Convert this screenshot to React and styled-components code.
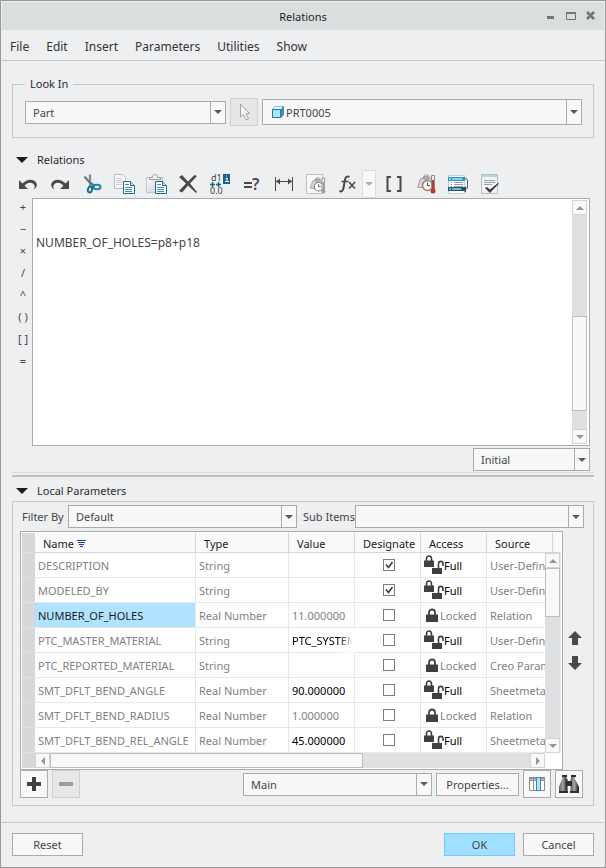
import React, { useState } from "react";
import styled, { createGlobalStyle } from "styled-components";

const operators = ["+", "−", "×", "/", "^", "( )", "[ ]", "="];

const parameters = [
  { name: "DESCRIPTION", type: "String", value: "", designate: true, access: "Full", source: "User-Defined" },
  { name: "MODELED_BY", type: "String", value: "", designate: true, access: "Full", source: "User-Defined" },
  { name: "NUMBER_OF_HOLES", type: "Real Number", value: "11.000000", designate: false, access: "Locked", source: "Relation" },
  { name: "PTC_MASTER_MATERIAL", type: "String", value: "PTC_SYSTEM", designate: false, access: "Full", source: "User-Defined" },
  { name: "PTC_REPORTED_MATERIAL", type: "String", value: "", designate: false, access: "Locked", source: "Creo Parametric" },
  { name: "SMT_DFLT_BEND_ANGLE", type: "Real Number", value: "90.000000", designate: false, access: "Full", source: "Sheetmetal" },
  { name: "SMT_DFLT_BEND_RADIUS", type: "Real Number", value: "1.000000", designate: false, access: "Locked", source: "Relation" },
  { name: "SMT_DFLT_BEND_REL_ANGLE", type: "Real Number", value: "45.000000", designate: false, access: "Full", source: "Sheetmetal" },
];

/* ---------- icons ---------- */

const Svg = ({ w = 22, h = 22, children }) => (
  <svg width={w} height={h} viewBox={`0 0 ${w} ${h}`} fill="none" aria-hidden="true">
    {children}
  </svg>
);

const Triangle = ({ dir = "down", color = "#5c5c5c" }) => {
  const paths = {
    down: "M0 2h8L4 6z",
    up: "M0 6h8L4 2z",
    left: "M6 0v8L2 4z",
    right: "M2 0v8l4-4z",
  };
  return <Svg w={8} h={8}><path d={paths[dir]} fill={color} /></Svg>;
};

const UndoIcon = () => (
  <Svg>
    <path d="M2 7v9h9l-3.500-3.200C10 9.500 14 8.800 16.500 11c1.600 1.500 1.500 3.500.3 5.500 3-2 4-5 1.900-7.500C15.500 5.500 9.500 6 5.500 10.600z" fill="#48494b" />
  </Svg>
);

const RedoIcon = () => (
  <Svg>
    <path d="M20 7v9h-9l3.500-3.200C12 9.500 8 8.800 5.500 11c-1.600 1.500-1.500 3.500-.3 5.500-3-2-4-5-1.900-7.500C6.500 5.500 12.500 6 16.500 10.600z" fill="#48494b" />
  </Svg>
);

const CutIcon = () => (
  <Svg>
    <path d="M3.500 3.500l9 10M9 1.500v11" stroke="#85888b" strokeWidth="2.200" />
    <path d="M3 4l7 7" stroke="#55585b" />
    <path d="M10 10l4 3" stroke="#1f7fa8" strokeWidth="2" />
    <ellipse cx="16" cy="14" rx="3.500" ry="2.300" stroke="#1f85b0" strokeWidth="2" />
    <ellipse cx="9" cy="16.500" rx="2" ry="3" stroke="#176f96" strokeWidth="2" transform="rotate(15 9 16.500)" />
  </Svg>
);

const BluePage = () => (
  <>
    <path d="M10.500 8.500h7l4 4v8h-11z" fill="#fff" stroke="#1d6c8e" />
    <path d="M17.500 8.500v4h4" fill="#bfe2f1" stroke="#1d6c8e" />
    <path d="M12 11.500h4M12 14.500h7M12 16.500h7M12 18.500h7" stroke="#3c93ba" />
  </>
);

const CopyIcon = () => (
  <Svg>
    <path d="M1.500 1.500h8l3 3v11h-11z" fill="#f8f8f8" stroke="#bcbec0" />
    <path d="M3 5.500h6M3 7.500h7M3 9.500h7M3 11.500h6" stroke="#cccecf" />
    <BluePage />
  </Svg>
);

const PasteIcon = () => (
  <Svg>
    <defs>
      <linearGradient id="clip" x1="0" y1="0" x2="1" y2="1">
        <stop offset="0" stopColor="#fff" />
        <stop offset="1" stopColor="#c5c9cc" />
      </linearGradient>
    </defs>
    <path d="M1.500 4.500h16v15h-16z" fill="url(#clip)" stroke="#c2c4c6" />
    <path d="M4.500 6.500v-2h3c0-4 5-4 5 0h3v2z" fill="#f4f4f4" stroke="#999b9d" />
    <BluePage />
  </Svg>
);

const DeleteIcon = () => (
  <Svg>
    <path d="M2 4l3-2 6 6.500L17.500 2 20 3l-7 7.500 7 8.500-1 1-8-7.500L5 19.500 2 18l7-7.500z" fill="#48494b" />
  </Svg>
);

const DimensionIcon = () => (
  <Svg w={24} h={28}>
    <text x="3" y="11" fontSize="9" fill="#404244">d1</text>
    <rect x="15" y="4" width="7" height="10" fill="#146489" />
    <path d="M18 6h1M17.500 8.500h2M19 8v4M17 11.500h4" stroke="#fff" />
    <path d="M2 14.500h5M4.500 12v5M8 14.500h5M10.500 12v5" stroke="#146489" strokeWidth="1.500" />
    <text x="2" y="24" fontSize="9" fill="#404244">0.0</text>
  </Svg>
);

const VerifyIcon = () => (
  <Svg>
    <path d="M3 10h8M3 14h8" stroke="#48494b" strokeWidth="2" />
    <text x="11" y="17" fontSize="16" fontWeight="600" fill="#48494b">?</text>
  </Svg>
);

const MeasureIcon = () => (
  <Svg>
    <path d="M2.500 4v14M19.500 4v14M3 8.500h16" stroke="#48494b" />
    <path d="M3 8.500l4-3v6zM19 8.500l-4-3v6z" fill="#48494b" />
  </Svg>
);

const Gauge = ({ hand, tube }) => (
  <>
    <path d="M2.500 14.500l3-9h3c-1-5 7-5 6 0h3v9z" fill="#d3d5d7" stroke="#a3a5a7" />
    <path d="M9 6v-2h4v2z" fill="#fff" stroke="#77797b" />
    <circle cx="12.500" cy="12.500" r="5" fill="#fff" stroke={hand} strokeWidth="1.500" />
    <path d="M12.500 9.500v3H15" stroke="#48494b" />
    <path d="M16.500 2.500h3V16h-3z" fill="#f3f3f3" stroke="#8b8d8f" />
    <path d="M17 7h2v9h-2z" fill={tube} />
    <circle cx="18" cy="18" r="2.500" fill={tube} />
  </>
);

const MassIcon = () => (
  <Svg>
    <path d="M1.500 1.500h16v19h-16z" fill="#f7f8f8" stroke="#bfc1c3" />
    <g transform="translate(3 3) scale(.85)"><Gauge hand="#8d8f91" tube="#9d9fa1" /></g>
  </Svg>
);

const FunctionIcon = () => (
  <Svg>
    <path d="M12.500 4c-2.500-1.500-4 0-4.600 3L6.500 15c-.5 3-2 4-4 3" stroke="#48494b" strokeWidth="2" />
    <path d="M4.500 8.500h7" stroke="#48494b" strokeWidth="1.500" />
    <path d="M12 9l6 6.500M18 9l-6 6.500" stroke="#48494b" strokeWidth="1.600" />
  </Svg>
);

const BracketsIcon = () => (
  <Svg>
    <path d="M8 4H4.500v14H8M14 4h3.500v14H14" stroke="#48494b" strokeWidth="2" />
  </Svg>
);

const UnitsIcon = () => <Svg><Gauge hand="#b07a62" tube="#b53b32" /></Svg>;

const SwitchIcon = () => (
  <Svg>
    <path d="M1.500 2.500h16v18h-16z" fill="#fff" stroke="#bfd0d8" />
    <path d="M1 4h17v4H1z" fill="#2a9ac8" />
    <path d="M1 14h17v4H1z" fill="#0e5f83" />
    <path d="M2 6h2M5 6h10M2 16h2M5 16h9" stroke="#fff" />
    <path d="M4 9.500h1M7 9.500h9M4 11.500h1M7 11.500h9M4 13.500h1M7 13.500h9" stroke="#9b9da0" />
    <path d="M18 5.500c3 .5 2.500 2 2.500 6s-.5 5-3 5" stroke="#48494b" />
    <path d="M15 16.500l4-3v6z" fill="#48494b" />
  </Svg>
);

const CheckListIcon = () => (
  <Svg>
    <path d="M2.500 1.500h16v19h-16z" fill="#eff3f5" stroke="#b7bec3" />
    <path d="M3 2h15v2H3z" fill="#b8d5e6" />
    <path d="M5 7.500h11M5 9.500h11M5 11.500h8" stroke="#9fa4a8" />
    <path d="M6 15l2-1 3 2.500 8-6.500 1 .5-9 9.500z" fill="#3d3e40" />
  </Svg>
);

const PointerIcon = () => (
  <Svg w={14} h={20}>
    <path d="M3.500 2v13l3-2.500 2.500 5.500 2.500-1-2.500-5.500h3.500z" fill="#f4f4f4" stroke="#a5a6a8" />
  </Svg>
);

const PartIcon = () => (
  <Svg w={14} h={14}>
    <path d="M1 4.500L4 1h9v9l-3 3H1z" fill="#2d93c0" />
    <path d="M1.500 4.500h8v8h-8z" fill="#a5e6fb" stroke="#40738a" />
    <path d="M2 4l2-2.500h8L10 4z" fill="#dff7ff" />
  </Svg>
);

const LockIcon = () => (
  <Svg w={14} h={15}>
    <path d="M4 7V4.500c0-4 6-4 6 0V7" stroke="#3f4042" strokeWidth="1.800" />
    <path d="M1 6.500h12V14H1z" fill="#3f4042" />
  </Svg>
);

const FullAccessIcon = () => (
  <Svg w={20} h={20}>
    <path d="M2.500 6V4c0-4 5-4 5 0v2" stroke="#3f4042" strokeWidth="1.600" />
    <path d="M0 5.500h10V12H0z" fill="#3f4042" />
    <path d="M14.500 13V9c0-3.500 4.500-3.500 4.500 0v2" stroke="#3f4042" strokeWidth="1.600" />
    <path d="M8 13h10v6H8z" fill="#3f4042" />
  </Svg>
);

const FilterIcon = () => (
  <Svg w={9} h={9}>
    <path d="M0 1.500h9M1 3.500h7M2 5.500h5M3 7.500h3" stroke="#1c3f9e" />
  </Svg>
);

const Mark = () => (
  <Svg w={12} h={12}><path d="M3 5.500l2.500 3 4-5.500" stroke="#3c3c3c" strokeWidth="1.600" /></Svg>
);

const PlusIcon = ({ minus }) => (
  <Svg w={16} h={16}>
    <path d={minus ? "M1 8h14" : "M1 8h14M8 1v14"} stroke={minus ? "#9d9ea0" : "#3f4042"} strokeWidth="4" />
  </Svg>
);

const ColumnsIcon = () => (
  <Svg w={18} h={16}>
    <path d="M1.500 1.500h15v13h-15zM1.500 4.500h15M5.500 1.500v13M12.500 1.500v13" fill="#fff" stroke="#8d9093" />
    <path d="M1 2.500h16" stroke="#8d9093" strokeWidth="2" />
    <path d="M8.500 1.500h4v13h-4z" fill="#b5e3f5" stroke="#2c8cb7" />
  </Svg>
);

const FindIcon = () => (
  <Svg>
    <defs>
      <linearGradient id="lens" x1="0" x2="1" y1="0" y2="0">
        <stop offset="0" stopColor="#55575a" />
        <stop offset=".45" stopColor="#a5a7a9" />
        <stop offset="1" stopColor="#141414" />
      </linearGradient>
    </defs>
    <path d="M4.500 3h4v3h1v14H1v-6l3-8z" fill="url(#lens)" />
    <path d="M13 3h4v3l4 8v6h-8.500V6h.5z" fill="url(#lens)" />
    <path d="M4 2h5v2H4zM13 2h5v2h-5zM8 8h6v5H8zM1 18h9v2H1zM12 18h9v2h-9z" fill="#2e2f31" />
  </Svg>
);

const ArrowIcon = ({ down }) => (
  <Svg w={14} h={14}>
    <path d={down ? "M4 0h6v7h4l-7 7-7-7h4z" : "M4 14h6V7h4L7 0 0 7h4z"} fill="#48494b" />
  </Svg>
);

const Disclosure = () => <Svg w={12} h={6}><path d="M0 0h12L6 6z" fill="#1c1c1c" /></Svg>;

const toolsBefore = [
  ["Undo", UndoIcon], ["Redo", RedoIcon], ["Cut", CutIcon], ["Copy", CopyIcon], ["Paste", PasteIcon],
  ["Delete", DeleteIcon], ["Switch dimensions", DimensionIcon], ["Evaluate", VerifyIcon],
  ["Dimension", MeasureIcon], ["Mass properties", MassIcon],
];
const toolsAfter = [
  ["Brackets", BracketsIcon], ["Units", UnitsIcon], ["Sort relations", SwitchIcon], ["Verify", CheckListIcon],
];

/* ---------- small parts ---------- */

const Dropdown = ({ id, label, options, icon, tall, indent }) => (
  <DropdownBox $tall={tall}>
    <DropdownSelect id={id} aria-label={label} $indent={indent}>
      {options.map((o) => <option key={o}>{o}</option>)}
    </DropdownSelect>
    {icon && <DropdownIcon>{icon}</DropdownIcon>}
    <DropdownArrow><Triangle /></DropdownArrow>
  </DropdownBox>
);

const Scrollbar = ({ horizontal, before, thumb, after, className }) => (
  <Track $horizontal={horizontal} className={className}>
    <ScrollButton type="button" aria-label={horizontal ? "Scroll left" : "Scroll up"}>
      <Triangle dir={horizontal ? "left" : "up"} color="#96979a" />
    </ScrollButton>
    <Gap $grow={before} />
    <Thumb $grow={thumb} />
    <Gap $grow={after} />
    <ScrollButton type="button" aria-label={horizontal ? "Scroll right" : "Scroll down"}>
      <Triangle dir={horizontal ? "right" : "down"} color="#96979a" />
    </ScrollButton>
  </Track>
);

const ParameterRow = ({ row, selected, onSelect }) => {
  const [checked, setChecked] = useState(row.designate);
  const full = row.access === "Full";
  return (
    <tr onClick={onSelect}>
      <Handle />
      <Cell $selected={selected}>{row.name}</Cell>
      <Cell>{row.type}</Cell>
      <Cell $dark={full} $fade={row.value.length > 9}>{row.value}</Cell>
      <Cell>
        <CheckBox>
          <input
            type="checkbox"
            aria-label={`Designate ${row.name}`}
            checked={checked}
            onChange={(e) => setChecked(e.target.checked)}
          />
          {checked && <Mark />}
        </CheckBox>
      </Cell>
      <Cell $dark={full}>
        <Access $full={full}>
          {full ? <FullAccessIcon /> : <LockIcon />}
          {row.access}
        </Access>
      </Cell>
      <Cell colSpan={2}>{row.source}</Cell>
    </tr>
  );
};

export default function App() {
  const [relations, setRelations] = useState("\n\nNUMBER_OF_HOLES=p8+p18");
  const [selected, setSelected] = useState("NUMBER_OF_HOLES");

  return (
    <Window>
      <GlobalStyle />
      <TitleBar>
        <Title>Relations</Title>
        <WindowButtons>
          <button type="button" aria-label="Minimize">
            <Svg w={12} h={12}><path d="M2 7.500h7" stroke="#727477" strokeWidth="3" /></Svg>
          </button>
          <button type="button" aria-label="Maximize">
            <Svg w={12} h={12}><path d="M1.500 3v6.500h9V3M1 3h10" stroke="#727477" /><path d="M1 3h10" stroke="#727477" strokeWidth="2" /></Svg>
          </button>
          <button type="button" aria-label="Close">
            <Svg w={12} h={12}><path d="M2 2l7 7M9 2L2 9" stroke="#727477" strokeWidth="2.600" /></Svg>
          </button>
        </WindowButtons>
      </TitleBar>
      <MenuBar>
        {["File", "Edit", "Insert", "Parameters", "Utilities", "Show"].map((m) => (
          <button type="button" key={m}>{m}</button>
        ))}
      </MenuBar>

      <Content>
        <LookIn>
          <legend>Look In</legend>
          <LookInRow>
            <Dropdown label="Object type" options={["Part", "Assembly", "Feature"]} />
            <SquareButton type="button" disabled aria-label="Select"><PointerIcon /></SquareButton>
            <Dropdown label="Object" options={["PRT0005"]} icon={<PartIcon />} tall indent />
          </LookInRow>
        </LookIn>

        <SectionTitle><Disclosure />Relations</SectionTitle>
        <Toolbar>
          {toolsBefore.map(([label, Icon]) => (
            <ToolButton type="button" key={label} aria-label={label}><Icon /></ToolButton>
          ))}
          <FunctionGroup>
            <ToolButton type="button" aria-label="Insert function"><FunctionIcon /></ToolButton>
            <ToolDrop type="button" aria-label="More functions"><Triangle color="#aeb0b2" /></ToolDrop>
          </FunctionGroup>
          {toolsAfter.map(([label, Icon]) => (
            <ToolButton type="button" key={label} aria-label={label}><Icon /></ToolButton>
          ))}
        </Toolbar>

        <EditorRow>
          <Operators>
            {operators.map((o) => <button type="button" key={o}>{o}</button>)}
          </Operators>
          <Editor>
            <textarea
              aria-label="Relations"
              spellCheck={false}
              value={relations}
              onChange={(e) => setRelations(e.target.value)}
            />
            <Scrollbar before={102} thumb={94} after={18} />
          </Editor>
        </EditorRow>
        <StageRow>
          <Dropdown label="Stage" options={["Initial", "Post Regeneration"]} />
        </StageRow>
        <Splitter />

        <SectionTitle><Disclosure />Local Parameters</SectionTitle>
        <Panel>
          <FilterRow>
            <label htmlFor="filter">Filter By</label>
            <Dropdown id="filter" options={["Default", "All"]} />
            <label htmlFor="sub">Sub Items</label>
            <Dropdown id="sub" options={[""]} />
          </FilterRow>
          <TableRow>
            <TableBox>
              <Table>
                <colgroup>
                  <col width="13" />
                  <col width="161" />
                  <col width="93" />
                  <col width="66" />
                  <col width="66" />
                  <col width="66" />
                  <col />
                  <col width="8" />
                </colgroup>
                <thead>
                  <tr>
                    <Handle as="th" />
                    <HeadCell>Name <FilterIcon /></HeadCell>
                    <HeadCell>Type</HeadCell>
                    <HeadCell>Value</HeadCell>
                    <HeadCell>Designate</HeadCell>
                    <HeadCell>Access</HeadCell>
                    <HeadCell>Source</HeadCell>
                    <HeadCell />
                  </tr>
                </thead>
                <tbody>
                  {parameters.map((row) => (
                    <ParameterRow
                      key={row.name}
                      row={row}
                      selected={row.name === selected}
                      onSelect={() => setSelected(row.name)}
                    />
                  ))}
                </tbody>
              </Table>
              <SideScroll before={0} thumb={48} after={122} />
              <HandleFoot />
              <BottomScroll horizontal before={0} thumb={313} after={168} />
            </TableBox>
            <MoveButtons>
              <button type="button" aria-label="Move up"><ArrowIcon /></button>
              <button type="button" aria-label="Move down"><ArrowIcon down /></button>
            </MoveButtons>
          </TableRow>
          <PanelFooter>
            <SquareButton type="button" aria-label="Add parameter"><PlusIcon /></SquareButton>
            <SquareButton type="button" disabled aria-label="Remove parameter"><PlusIcon minus /></SquareButton>
            <FooterRight>
              <Dropdown label="Parameter set" options={["Main"]} />
              <PushButton type="button" $wide>Properties...</PushButton>
              <SquareButton type="button" aria-label="Columns"><ColumnsIcon /></SquareButton>
              <SquareButton type="button" aria-label="Find"><FindIcon /></SquareButton>
            </FooterRight>
          </PanelFooter>
        </Panel>
      </Content>

      <DialogFooter>
        <PushButton type="button">Reset</PushButton>
        <FooterActions>
          <PushButton type="button" $primary>OK</PushButton>
          <PushButton type="button">Cancel</PushButton>
        </FooterActions>
      </DialogFooter>
    </Window>
  );
}

/* ---------- styles ---------- */

const GlobalStyle = createGlobalStyle`
  * {
    box-sizing: border-box;
  }
  body {
    margin: 0;
    background: #eeeff1;
  }
  body, button, select, textarea, input {
    font-family: "Noto Sans", "Open Sans", sans-serif;
    font-size: 11px;
    color: #444547;
  }
  button {
    padding: 0;
    border: 0;
    background: none;
  }
  svg {
    display: block;
    flex: none;
  }
`;

const Window = styled.div`
  display: flex;
  flex-direction: column;
  min-height: 100vh;
  padding: 1px;
  border: 1px solid #98989b;
  background: #eeeff1;
`;

const TitleBar = styled.header`
  display: grid;
  grid-template-columns: 1fr auto 1fr;
  align-items: center;
  height: 28px;
  background: #dadedf;
`;

const Title = styled.h1`
  grid-column: 2;
  margin: 0;
  font-size: 11px;
  font-weight: 400;
  color: #1f1f1f;
`;

const WindowButtons = styled.div`
  display: flex;
  justify-content: flex-end;
  gap: 8px;
  padding-right: 7px;
`;

const MenuBar = styled.nav`
  display: flex;
  gap: 17px;
  height: 31px;
  padding: 2px 8px 0;
  border-bottom: 1px solid #c6c8ca;
  button {
    font-size: 12px;
    color: #333436;
  }
`;

const Content = styled.main`
  display: flex;
  flex-direction: column;
  flex: 1;
  padding: 15px 10px 16px;
`;

const LookIn = styled.fieldset`
  margin: 0;
  padding: 6px 11px 11px 12px;
  min-width: 0;
  border: 1px solid #c6c8ca;
  legend {
    padding: 0 5px;
    line-height: 16px;
    color: #2b2b2b;
  }
`;

const LookInRow = styled.div`
  display: grid;
  grid-template-columns: 201fr 28px 320fr;
  gap: 4px;
  align-items: center;
`;

const DropdownBox = styled.div`
  display: grid;
  grid-template-columns: 1fr 15px;
  height: ${(p) => (p.$tall ? "26px" : "23px")};
  min-width: 0;
  border: 1px solid #a9abad;
  background: #f8f8f8;
`;

const DropdownSelect = styled.select`
  grid-area: 1 / 1 / 2 / 3;
  appearance: none;
  width: 100%;
  min-width: 0;
  padding: 0 18px 0 ${(p) => (p.$indent ? "23px" : "7px")};
  border: 0;
  border-radius: 0;
  background: transparent;
`;

const DropdownIcon = styled.span`
  grid-area: 1 / 1;
  align-self: center;
  padding-left: 8px;
  pointer-events: none;
`;

const DropdownArrow = styled.span`
  grid-area: 1 / 2;
  display: grid;
  place-items: center;
  border-left: 1px solid #a9abad;
  pointer-events: none;
`;

const SquareButton = styled.button`
  display: grid;
  place-items: center;
  width: 28px;
  height: 28px;
  border: 1px solid ${(p) => (p.disabled ? "#cfd0d2" : "#a9abad")};
  background: ${(p) => (p.disabled ? "#e6e7e9" : "#f8f8f8")};
`;

const SectionTitle = styled.h2`
  display: flex;
  align-items: center;
  gap: 9px;
  margin: 0;
  padding-left: 4px;
  font-size: 11px;
  font-weight: 400;
  line-height: 20px;
  color: #2b2b2b;
  ${LookIn} + & {
    margin-top: 12px;
  }
`;

const Toolbar = styled.div`
  display: flex;
  height: 28px;
`;

const ToolButton = styled.button`
  display: grid;
  place-items: center;
  width: 32px;
`;

const FunctionGroup = styled.div`
  display: grid;
  grid-template-columns: 30px 14px;
  padding-right: 2px;
`;

const ToolDrop = styled.button`
  display: grid;
  place-items: center;
  border: 1px solid #dcdddf;
  background: #f8f8f8;
`;

const EditorRow = styled.div`
  display: grid;
  grid-template-columns: 20px 1fr;
  flex: 1;
  min-height: 200px;
  padding-right: 4px;
`;

const Operators = styled.div`
  display: flex;
  flex-direction: column;
  button {
    height: 22px;
    padding: 0 0 4px 2px;
    line-height: 18px;
    white-space: nowrap;
  }
`;

const Editor = styled.div`
  display: flex;
  padding: 1px 2px 1px 0;
  border: 1px solid #a9abad;
  background: #fff;
  textarea {
    flex: 1;
    min-width: 0;
    padding: 0 3px;
    border: 0;
    outline: 0;
    resize: none;
    overflow: hidden;
    font-size: 12px;
    line-height: 17px;
    background: transparent;
  }
`;

const Track = styled.div`
  display: flex;
  flex-direction: ${(p) => (p.$horizontal ? "row" : "column")};
  ${(p) => (p.$horizontal ? "height: 15px;" : "width: 15px;")}
  background: #dfe0e2;
`;

const ScrollButton = styled.button`
  display: grid;
  place-items: center;
  flex: none;
  width: 15px;
  height: 15px;
  border: 1px solid #d3d4d6;
  background: #f8f8f8;
`;

const Gap = styled.div`
  flex: ${(p) => p.$grow} 0 0;
`;

const Thumb = styled.div`
  flex: ${(p) => p.$grow} 0 0;
  border: 1px solid #bcbec0;
  background: #f8f8f8;
`;

const StageRow = styled.div`
  display: grid;
  grid-template-columns: 117px;
  justify-content: end;
  padding: 2px 4px 1px;
`;

const Splitter = styled.div`
  height: 5px;
  margin-bottom: 4px;
  border-top: 1px solid #dcdddf;
  border-bottom: 2px solid #bdbec0;
`;

const Panel = styled.section`
  padding: 3px 9px 7px 7px;
  border: 1px solid #c6c8ca;
`;

const FilterRow = styled.div`
  display: grid;
  grid-template-columns: 48px 1fr 58px 1fr;
  align-items: center;
  margin-bottom: 3px;
  label {
    padding-left: 2px;
    white-space: nowrap;
  }
  label + div + label {
    padding-left: 6px;
  }
`;

const TableRow = styled.div`
  display: grid;
  grid-template-columns: 1fr 21px;
`;

const TableBox = styled.div`
  display: grid;
  grid-template-columns: 13px 1fr 16px;
  grid-template-rows: 20px 1fr 16px;
  min-width: 0;
  padding: 1px 1px 0;
  border: 1px solid #a9abad;
  background: #fff;
`;

const Table = styled.table`
  grid-area: 1 / 1 / 3 / 4;
  width: 100%;
  table-layout: fixed;
  border-collapse: separate;
  border-spacing: 0;
`;

const HeadCell = styled.th`
  height: 20px;
  padding: 2px 0 0 8px;
  border-right: 1px solid #d3d7da;
  border-bottom: 1px solid #d3d7da;
  background: #fafafa;
  font-weight: 400;
  line-height: 16px;
  text-align: left;
  white-space: nowrap;
  color: #1b1b1f;
  &:last-child {
    border-right: 0;
  }
  svg {
    display: inline-block;
  }
`;

const Cell = styled.td`
  height: 25px;
  padding: 0 0 0 3px;
  overflow: hidden;
  border-right: 1px solid #e6e9ec;
  border-bottom: 1px solid #e6e9ec;
  background: ${(p) => (p.$selected ? "#b0e3ff" : "#fff")};
  color: ${(p) => (p.$selected ? "#1b1b1f" : p.$dark ? "#000" : "#808183")};
  white-space: nowrap;
  ${(p) => p.$fade && `
    mask-image: linear-gradient(90deg, #000 50px, transparent 64px);
  `}
`;

const Handle = styled.td`
  padding: 0;
  border-right: 1px solid #d3d7da;
  border-bottom: 1px solid #e0e0e0;
  background: #d8d8d8;
`;

const HandleFoot = styled.div`
  grid-area: 3 / 1;
  height: 15px;
  background: #d8d8d8;
`;

const SideScroll = styled(Scrollbar)`
  grid-area: 2 / 3;
`;

const BottomScroll = styled(Scrollbar)`
  grid-area: 3 / 2;
`;

const CheckBox = styled.label`
  display: grid;
  width: 12px;
  margin: 0 auto;
  input {
    grid-area: 1 / 1;
    appearance: none;
    width: 12px;
    height: 12px;
    margin: 0;
    border: 1px solid #7b7c7e;
    background: #fff;
  }
  svg {
    grid-area: 1 / 1;
    pointer-events: none;
  }
`;

const Access = styled.span`
  display: flex;
  align-items: center;
  gap: ${(p) => (p.$full ? "0" : "1px")};
  padding-left: ${(p) => (p.$full ? "0" : "1px")};
`;

const MoveButtons = styled.div`
  display: flex;
  flex-direction: column;
  justify-content: center;
  align-items: flex-end;
  gap: 11px;
  padding-right: 2px;
`;

const PanelFooter = styled.div`
  display: flex;
  align-items: center;
  gap: 4px;
  padding-right: 1px;
`;

const FooterRight = styled.div`
  display: grid;
  grid-template-columns: 189px 83px 28px 28px;
  gap: 4px;
  align-items: center;
  margin-left: auto;
`;

const PushButton = styled.button`
  width: ${(p) => (p.$wide ? "83px" : "71px")};
  height: 23px;
  border: 1px solid ${(p) => (p.$primary ? "#6fcbf8" : "#a9abad")};
  background: ${(p) => (p.$primary ? "#a0dfff" : "#f8f8f8")};
`;

const DialogFooter = styled.footer`
  display: flex;
  justify-content: space-between;
  padding: 10px;
  border-top: 1px solid #c6c8ca;
`;

const FooterActions = styled.div`
  display: flex;
  gap: 8px;
`;
